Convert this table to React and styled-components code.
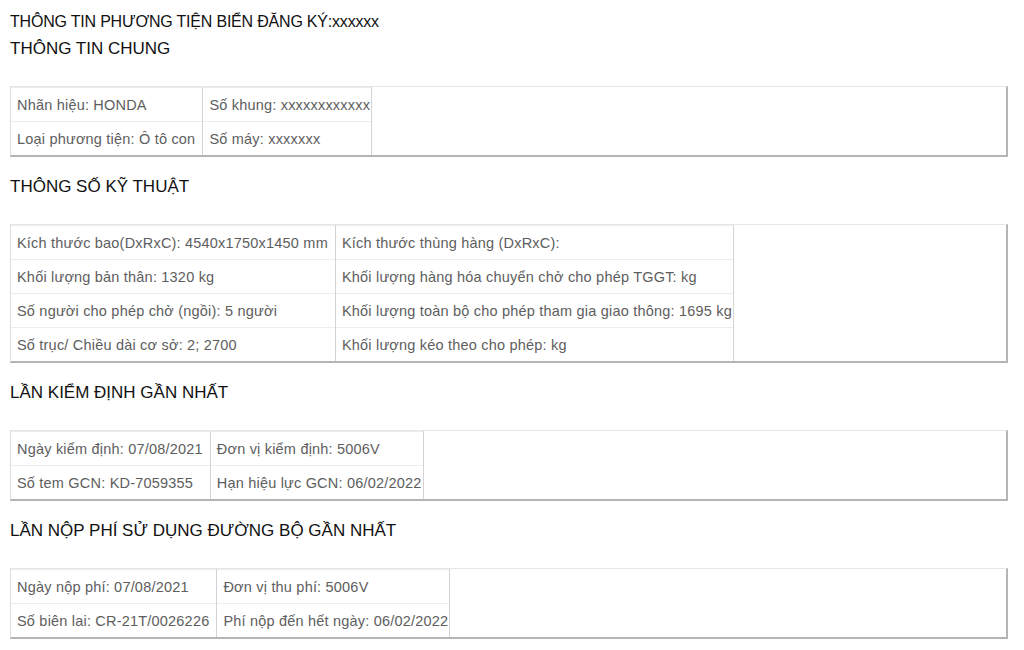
import styled, { createGlobalStyle } from "styled-components";

const GlobalStyle = createGlobalStyle`
  body {
    margin: 0;
    background: #ffffff;
    font-family: "Liberation Sans", Arial, sans-serif;
  }
`;

const sections = [
  {
    title: "THÔNG TIN CHUNG",
    rows: [
      ["Nhãn hiệu: HONDA", "Số khung: xxxxxxxxxxxx"],
      ["Loại phương tiện: Ô tô con", "Số máy: xxxxxxx"],
    ],
  },
  {
    title: "THÔNG SỐ KỸ THUẬT",
    rows: [
      ["Kích thước bao(DxRxC): 4540x1750x1450 mm", "Kích thước thùng hàng (DxRxC):"],
      ["Khối lượng bản thân: 1320 kg", "Khối lượng hàng hóa chuyển chở cho phép TGGT: kg"],
      ["Số người cho phép chở (ngồi): 5 người", "Khối lượng toàn bộ cho phép tham gia giao thông: 1695 kg"],
      ["Số trục/ Chiều dài cơ sở: 2; 2700", "Khối lượng kéo theo cho phép: kg"],
    ],
  },
  {
    title: "LẦN KIỂM ĐỊNH GẦN NHẤT",
    rows: [
      ["Ngày kiểm định: 07/08/2021", "Đơn vị kiểm định: 5006V"],
      ["Số tem GCN: KD-7059355", "Hạn hiệu lực GCN: 06/02/2022"],
    ],
  },
  {
    title: "LẦN NỘP PHÍ SỬ DỤNG ĐƯỜNG BỘ GẦN NHẤT",
    rows: [
      ["Ngày nộp phí: 07/08/2021", "Đơn vị thu phí: 5006V"],
      ["Số biên lai: CR-21T/0026226", "Phí nộp đến hết ngày: 06/02/2022"],
    ],
  },
];

export default function App() {
  return (
    <>
      <GlobalStyle />
      <Page>
        <Title>THÔNG TIN PHƯƠNG TIỆN BIỂN ĐĂNG KÝ:xxxxxx</Title>
        {sections.map((s) => (
          <Section key={s.title}>
            <Heading>{s.title}</Heading>
            <Frame>
              <Table>
                <tbody>
                  {s.rows.map((r, i) => (
                    <Row key={i}>
                      {r.map((c) => (
                        <Cell key={c}>{c}</Cell>
                      ))}
                    </Row>
                  ))}
                </tbody>
              </Table>
            </Frame>
          </Section>
        ))}
      </Page>
    </>
  );
}

const Page = styled.div`
  padding: 12px 16px 0 10px;
  display: flex;
  flex-direction: column;
`;

const Title = styled.div`
  font-size: 16px;
  line-height: 20px;
  letter-spacing: -0.2px;
  color: #111;
  margin-bottom: 7px;
`;

const Section = styled.section`
  display: flex;
  flex-direction: column;
  margin-bottom: 20px;
`;

const Heading = styled.div`
  font-size: 17px;
  line-height: 20px;
  color: #111;
  margin-bottom: 27px;
`;

const Frame = styled.div`
  border-style: solid;
  border-width: 1px 2px 2px 1px;
  border-color: #e6e6e6 #b4b4b4 #b4b4b4 #dcdcdc;
`;

const Table = styled.table`
  border-collapse: collapse;
  border-spacing: 0;
`;

const Row = styled.tr``;

const Cell = styled.td`
  height: 33px;
  padding: 0 7px 0 6px;
  font-size: 14.5px;
  letter-spacing: 0.2px;
  color: #5e5e5e;
  white-space: nowrap;
  border-right: 1px solid #d4d4d4;
  border-top: 1px solid #ececec;

  &:last-child {
    padding-right: 1px;
  }
`;
